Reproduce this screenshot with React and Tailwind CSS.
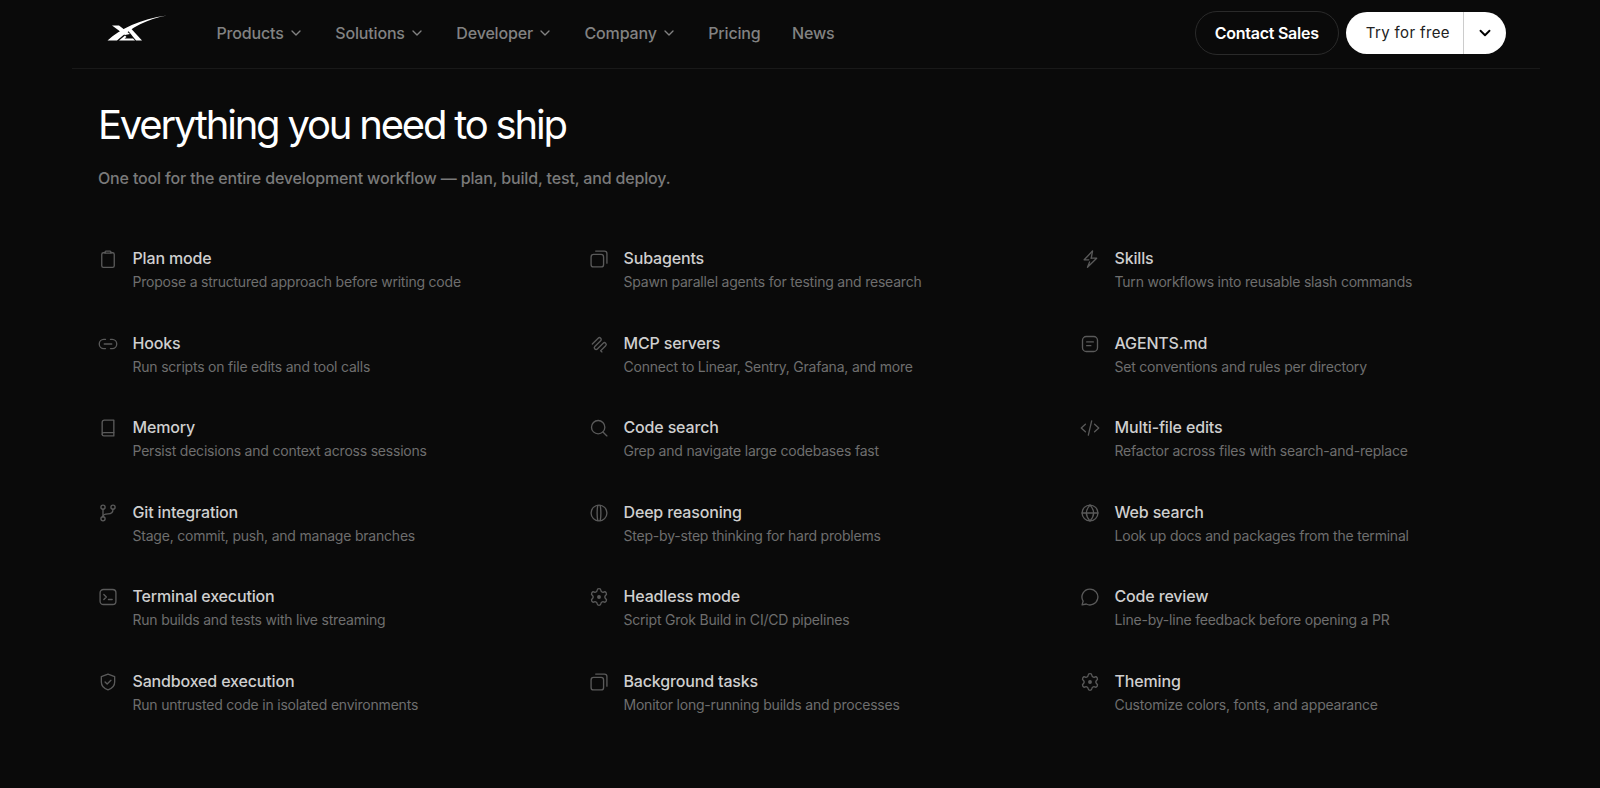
import { ChevronDown } from 'lucide-react';

const Svg = ({ children }) => (
  <svg width="20" height="20" viewBox="0 0 24 24" fill="none" stroke="currentColor" strokeWidth="1.6" strokeLinecap="round" strokeLinejoin="round">
    {children}
  </svg>
);

const GEAR = 'M9.671 4.136a2.34 2.34 0 0 1 4.659 0 2.34 2.34 0 0 0 3.319 1.915 2.34 2.34 0 0 1 2.33 4.033 2.34 2.34 0 0 0 0 3.831 2.34 2.34 0 0 1-2.33 4.033 2.34 2.34 0 0 0-3.319 1.915 2.34 2.34 0 0 1-4.659 0 2.34 2.34 0 0 0-3.32-1.915 2.34 2.34 0 0 1-2.33-4.033 2.34 2.34 0 0 0 0-3.831A2.34 2.34 0 0 1 6.35 6.051a2.34 2.34 0 0 0 3.319-1.915';

const ICONS = {
  clipboard: <><path d="M8.500 4.500H6.500a2 2 0 0 0-2 2V20a2 2 0 0 0 2 2h11a2 2 0 0 0 2-2V6.500a2 2 0 0 0-2-2h-2" /><path d="M8.500 5V3.500a1 1 0 0 1 1-1h5a1 1 0 0 1 1 1V5z" /></>,
  link: <><path d="M9 6.500H7a5.500 5.500 0 0 0 0 11h2" /><path d="M15 6.500h2a5.500 5.500 0 0 1 0 11h-2" /><path d="M7.500 12h9" /></>,
  book: <><path d="M5 19V5a2.500 2.500 0 0 1 2.500-2.500H19v15H7a2 2 0 0 0-2 2z" /><path d="M5 19.500A2 2 0 0 0 7 21.500h12V17.500" /></>,
  git: <><circle cx="6" cy="5" r="2.500" /><circle cx="6" cy="19" r="2.500" /><circle cx="18" cy="5" r="2.500" /><path d="M6 7.500v9" /><path d="M18 7.500c0 4-3 5.500-6 5.500-3 0-6 .5-6 3.500" /></>,
  terminal: <><rect x="2.500" y="3" width="19" height="18" rx="4" /><path d="m7 9 3 3-3 3" /><path d="M12.500 15H17" /></>,
  shield: <><path d="M12 2.500 20 5.500v6.500c0 5-3.500 8-8 9.500-4.500-1.500-8-4.500-8-9.500V5.500z" /><path d="m8.500 12 2.500 2.500 4.500-4.500" /></>,
  copy: <><rect x="2.500" y="6.500" width="15" height="15" rx="3" /><path d="M8 2.500h10.500a3 3 0 0 1 3 3V17" /></>,
  mcp: <path d="M4 12 11 5a2.100 2.100 0 0 1 3 3L7 15a2.100 2.100 0 0 0 3 3l7-7a2.100 2.100 0 0 1 3 3l-6 6 1.500 1.500" />,
  search: <><circle cx="11" cy="11" r="8" /><path d="m21.500 21.500-4.800-4.800" /></>,
  brain: <><circle cx="12" cy="12" r="9.500" /><path d="M10.500 2.800c-1 6-1 12.400 0 18.400" /><path d="M13.500 2.800c1 6 1 12.400 0 18.400" /></>,
  gear: <><path d={GEAR} /><circle cx="12" cy="12" r="1.500" fill="currentColor" /></>,
  zap: <><path d="M15 2.500 5 13h5.500" /><path d="M13.500 11H20L9 22l2.500-6.500" /><path d="M15 2.500 13.500 11" /></>,
  note: <><rect x="3" y="3" width="18" height="18" rx="4.500" /><path d="M8 9.500h8" /><path d="M8 14h5" /></>,
  code: <><path d="m6.500 7.500-5 4.500 5 4.500" /><path d="m17.500 7.500 5 4.500-5 4.500" /><path d="m14 3.500-4 17" /></>,
  globe: <><circle cx="12" cy="12" r="9.500" /><path d="M2.500 12h19" /><path d="M12 2.500c-5.500 6-5.500 13 0 19" /><path d="M12 2.500c5.500 6 5.500 13 0 19" /></>,
  chat: <path d="M12 2.500a9.500 9.500 0 1 1-4.500 17.900L2.500 21.500 3.800 17A9.500 9.500 0 0 1 12 2.500z" />,
};

const FEATURES = [
  ['clipboard', 'Plan mode', 'Propose a structured approach before writing code'],
  ['copy', 'Subagents', 'Spawn parallel agents for testing and research'],
  ['zap', 'Skills', 'Turn workflows into reusable slash commands'],
  ['link', 'Hooks', 'Run scripts on file edits and tool calls'],
  ['mcp', 'MCP servers', 'Connect to Linear, Sentry, Grafana, and more'],
  ['note', 'AGENTS.md', 'Set conventions and rules per directory'],
  ['book', 'Memory', 'Persist decisions and context across sessions'],
  ['search', 'Code search', 'Grep and navigate large codebases fast'],
  ['code', 'Multi-file edits', 'Refactor across files with search-and-replace'],
  ['git', 'Git integration', 'Stage, commit, push, and manage branches'],
  ['brain', 'Deep reasoning', 'Step-by-step thinking for hard problems'],
  ['globe', 'Web search', 'Look up docs and packages from the terminal'],
  ['terminal', 'Terminal execution', 'Run builds and tests with live streaming'],
  ['gear', 'Headless mode', 'Script Grok Build in CI/CD pipelines'],
  ['chat', 'Code review', 'Line-by-line feedback before opening a PR'],
  ['shield', 'Sandboxed execution', 'Run untrusted code in isolated environments'],
  ['copy', 'Background tasks', 'Monitor long-running builds and processes'],
  ['gear', 'Theming', 'Customize colors, fonts, and appearance'],
];

function Logo() {
  return (
    <svg className="mb-[10px]" width="72" height="36" viewBox="0 0 72 36" fill="white">
      <path d="M5.500 30.500C18 19 38 9 65 5.500 45 9 30 17 15 30.500z" />
      <path d="M10 15.500h7L28 24l-5 1z" />
      <path d="M26 20.500l3-2L40 30.500h-6z" />
      <path d="M17 30.500l6-5 1.500 1.500-2 1.500h8.500l2 2z" />
    </svg>
  );
}

function NavLink({ label, menu }) {
  return (
    <a className="flex items-center gap-1 text-base font-medium tracking-[-0.01em] text-[#828282]">
      {label}
      {menu && <ChevronDown size={16} strokeWidth={2} />}
    </a>
  );
}

export default function App() {
  return (
    <div className="min-h-[788px] bg-[#0a0a0a] font-['Inter',sans-serif]">
      <div className="ml-[72px] w-[1468px] border-b border-[#191919]">
        <header className="flex h-[68px] items-center justify-between pb-[2px] pl-[30px] pr-[34px]">
          <div className="flex items-center gap-[42.500px]">
            <Logo />
            <nav className="flex items-center gap-[31.500px]">
              <NavLink label="Products" menu />
              <NavLink label="Solutions" menu />
              <NavLink label="Developer" menu />
              <NavLink label="Company" menu />
              <NavLink label="Pricing" />
              <NavLink label="News" />
            </nav>
          </div>
          <div className="flex items-center gap-[7px]">
            <button className="h-[44px] w-[144px] rounded-full border border-[#2a2a2a] text-base font-semibold tracking-[-0.015em] text-white">Contact Sales</button>
            <div className="flex h-[42px] items-center rounded-full bg-white text-black">
              <span className="pl-5 pr-[13px] text-[15px] tracking-wide text-[#222]">Try for free</span>
              <span className="flex h-full w-[43px] items-center justify-center border-l border-[#ccc]">
                <ChevronDown size={18} strokeWidth={2.5} />
              </span>
            </div>
          </div>
        </header>
      </div>
      <main className="pl-[98px] pr-[93px] pt-[32px]">
        <h1 className="text-[40px] leading-[48px] tracking-[-0.055em] font-normal text-white">Everything you need to ship</h1>
        <p className="mt-[17px] text-base leading-6 font-medium tracking-[-0.01em] text-[#7a7a7a]">One tool for the entire development workflow — plan, build, test, and deploy.</p>
        <div className="mt-[56px] grid grid-cols-3 gap-x-16 gap-y-[38.5px]">
          {FEATURES.map(([icon, title, text]) => (
            <div key={title} className="flex gap-[14.500px]">
              <span className="mt-[3px] text-[#5a5a5a]"><Svg>{ICONS[icon]}</Svg></span>
              <div>
                <div className="text-base leading-6 font-medium tracking-[-0.01em] text-[#cfcfcf]">{title}</div>
                <div className="mt-[2px] text-sm leading-5 tracking-[-0.015em] text-[#6e6e6e]">{text}</div>
              </div>
            </div>
          ))}
        </div>
      </main>
    </div>
  );
}
